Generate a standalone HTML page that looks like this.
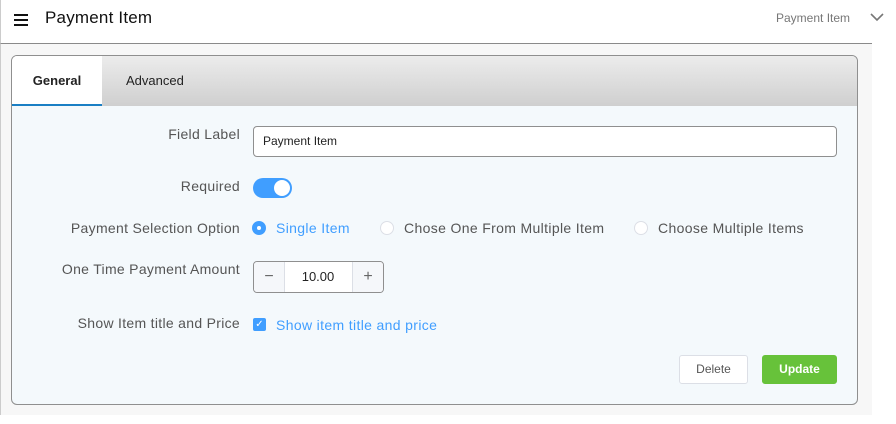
<!DOCTYPE html>
<html><head><style>
*{box-sizing:border-box;margin:0;padding:0}
body{width:896px;height:424px;background:#fff;font-family:"Liberation Sans",Arial,sans-serif;position:relative;overflow:hidden;color:#1f2d3d}
.hdr{position:absolute;left:0;top:0;width:872px;height:44px;border-bottom:1px solid #8a8a8a;border-left:1px solid #ccc}
.bg{position:absolute;left:0;top:44px;width:872px;height:371px;background:#f7f7f7;border-left:1px solid #ccc}
.title{position:absolute;left:45px;top:8px;font-size:17px;color:#111;letter-spacing:0.2px}
.burg{position:absolute;left:14px;top:14px;width:14px}
.burg i{display:block;height:2px;background:#111;margin-bottom:3px}
.crumb{position:absolute;left:776px;top:11px;font-size:12px;color:#777}
.card{position:absolute;left:11px;top:55px;width:847px;height:350px;border:1px solid #8f8f8f;border-radius:6px;background:#f4f9fc;overflow:hidden}
.tabs{height:50px;background:linear-gradient(#ececec,#cfcfcf);position:relative}
.tab{position:absolute;top:0;height:50px;line-height:50px;font-size:13px;color:#222}
.t1{left:0;width:90px;background:#fff;text-align:center;font-weight:bold;border-bottom:2px solid #1a7fc4}
.t2{left:114px}
.lbl{position:absolute;right:617px;font-size:14px;letter-spacing:0.3px;color:#555;white-space:nowrap}
.inp{position:absolute;left:241px;top:70px;width:584px;height:31px;border:1px solid #8f8f8f;border-radius:4px;background:#fff;font-size:12px;line-height:29px;padding-left:9px;color:#222}
.tog{position:absolute;left:241px;top:122px;width:39px;height:20px;border-radius:10px;background:#409eff}
.tog i{position:absolute;right:2px;top:2px;width:16px;height:16px;border-radius:50%;background:#fff}
.rad{position:absolute;top:165px;width:14px;height:14px;border-radius:50%;border:1px solid #dcdfe6;background:#fff}
.rad.on{background:#409eff;border-color:#409eff}
.rad.on i{position:absolute;left:4px;top:4px;width:4px;height:4px;border-radius:50%;background:#fff}
.rt{position:absolute;top:164px;font-size:14px;letter-spacing:0.35px;color:#555}
.num{position:absolute;left:241px;top:205px;width:131px;height:32px;border:1px solid #8f8f8f;border-radius:4px;background:#fff;overflow:hidden}
.num .b{position:absolute;top:0;width:31px;height:30px;background:#f5f7fa;text-align:center;line-height:30px;color:#666;font-size:16px}
.num .v{position:absolute;left:31px;width:66px;text-align:center;line-height:30px;font-size:13px;color:#222}
.cb{position:absolute;left:241px;top:262px;width:13px;height:13px;border-radius:2px;background:#409eff;color:#fff;font-size:10px;line-height:13px;text-align:center}
.btn{position:absolute;top:299px;height:29px;border-radius:3px;font-size:12px;line-height:27px;text-align:center}
</style></head><body>
<div class="hdr"></div><div class="bg"></div>
<div class="burg"><i></i><i></i><i></i></div>
<div class="title">Payment Item</div>
<div class="crumb">Payment Item</div>
<svg style="position:absolute;left:870px;top:12px" width="14" height="10"><path d="M1 2l6 6 6-6" stroke="#777" stroke-width="1.6" fill="none"/></svg>
<div class="card">
<div class="tabs"><div class="tab t1">General</div><div class="tab t2">Advanced</div></div>
<div class="lbl" style="top:70px">Field Label</div>
<div class="inp">Payment Item</div>
<div class="lbl" style="top:122px">Required</div>
<div class="tog"><i></i></div>
<div class="lbl" style="top:164px">Payment Selection Option</div>
<div class="rad on" style="left:240px"><i></i></div><div class="rt" style="left:264px;color:#409eff">Single Item</div>
<div class="rad" style="left:368px"></div><div class="rt" style="left:392px">Chose One From Multiple Item</div>
<div class="rad" style="left:622px"></div><div class="rt" style="left:646px">Choose Multiple Items</div>
<div class="lbl" style="top:205px">One Time Payment Amount</div>
<div class="num"><div class="b" style="left:0;border-right:1px solid #dcdfe6">−</div><div class="v">10.00</div><div class="b" style="right:0;border-left:1px solid #dcdfe6">+</div></div>
<div class="lbl" style="top:259px">Show Item title and Price</div>
<div class="cb">✓</div><div class="rt" style="left:264px;top:261px;color:#409eff">Show item title and price</div>
<div class="btn" style="left:667px;width:69px;background:#fff;border:1px solid #dcdfe6;color:#555">Delete</div>
<div class="btn" style="left:750px;width:75px;background:#67c23a;border:1px solid #67c23a;color:#fff;font-weight:bold">Update</div>
</div>
</body></html>
